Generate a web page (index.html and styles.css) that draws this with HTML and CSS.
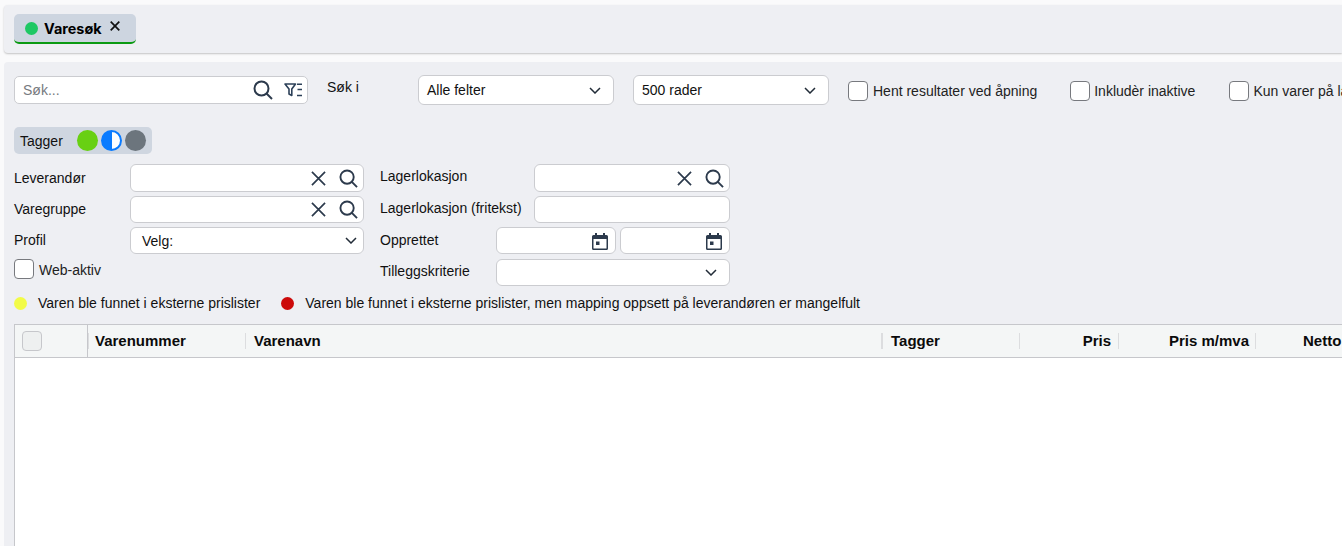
FILE: index.html
```html
<!DOCTYPE html>
<html lang="no">
<head>
<meta charset="utf-8">
<title>Varesøk</title>
<link rel="stylesheet" href="styles.css">
</head>
<body>
<svg class="defs" width="0" height="0" aria-hidden="true">
  <symbol id="i-search" viewBox="0 0 20 20"><circle cx="8.500" cy="8.500" r="7" fill="none" stroke="currentColor" stroke-width="2"/><path d="M13.500 13.500L19 19" stroke="currentColor" stroke-width="2" fill="none"/></symbol>
  <symbol id="i-x" viewBox="0 0 16 16"><path d="M1 1L15 15M15 1L1 15" stroke="currentColor" stroke-width="1.800" fill="none"/></symbol>
  <symbol id="i-chev" viewBox="0 0 12 7"><path d="M1 1L6 6L11 1" stroke="currentColor" stroke-width="1.500" fill="none"/></symbol>
  <symbol id="i-cal" viewBox="0 0 16 18"><path d="M3 1h2v2h6V1h2v2h1.500A1.500 1.500 0 0 1 16 4.500v12A1.500 1.500 0 0 1 14.500 18h-13A1.500 1.500 0 0 1 0 16.500v-12A1.500 1.500 0 0 1 1.500 3H3zM1.500 7v9.500h13V7z" fill="currentColor"/><rect x="4" y="9.500" width="3.500" height="3.500" fill="currentColor"/></symbol>
</svg>

<section class="panel tabs">
  <div class="tab">
    <span class="tab-dot"></span>
    <span class="tab-label">Varesøk</span>
    <svg class="tab-x" width="10" height="10" viewBox="0 0 10 10"><path d="M.7.700L9.300 9.300M9.300.700L.7 9.300" stroke="currentColor" stroke-width="1.700" fill="none"/></svg>
  </div>
</section>

<main class="panel search">
  <div class="top-row">
    <div class="field search-box">
      <span class="placeholder">Søk...</span>
      <svg class="ic-search-lg" width="20" height="20"><use href="#i-search"/></svg>
      <svg class="ic-filter" width="19" height="14" viewBox="0 0 19 14"><path d="M1 1h10.500L7.800 6v6.500L5 11V6z" fill="none" stroke="currentColor" stroke-width="1.600" stroke-linejoin="round"/><path d="M13 1.200h5M13.500 6.500h4.500M13 12.500h5" stroke="currentColor" stroke-width="1.500" fill="none"/></svg>
    </div>
    <span class="search-in">Søk i</span>
    <div class="field select w196"><span>Alle felter</span><svg class="chev" width="12" height="7"><use href="#i-chev"/></svg></div>
    <div class="field select w196"><span>500 rader</span><svg class="chev" width="12" height="7"><use href="#i-chev"/></svg></div>
    <label class="check c1"><span class="box"></span>Hent resultater ved åpning</label>
    <label class="check c2"><span class="box"></span>Inkludèr inaktive</label>
    <label class="check c3"><span class="box"></span>Kun varer på lager</label>
  </div>

  <div class="tagger">
    <span class="tagger-label">Tagger</span>
    <span class="tag green"></span>
    <span class="tag half"></span>
    <span class="tag grey"></span>
  </div>

  <div class="form">
    <div class="col col-left">
      <div class="row">
        <span class="lbl">Leverandør</span>
        <div class="field lookup w234"><svg class="ic-x" width="15" height="15"><use href="#i-x"/></svg><svg class="ic-s" width="19" height="19"><use href="#i-search"/></svg></div>
      </div>
      <div class="row r2">
        <span class="lbl">Varegruppe</span>
        <div class="field lookup w234"><svg class="ic-x" width="15" height="15"><use href="#i-x"/></svg><svg class="ic-s" width="19" height="19"><use href="#i-search"/></svg></div>
      </div>
      <div class="row r3">
        <span class="lbl">Profil</span>
        <div class="field select w234 velg"><span>Velg:</span><svg class="chev" width="12" height="7"><use href="#i-chev"/></svg></div>
      </div>
      <label class="check web"><span class="box"></span><span class="web-text">Web-aktiv</span></label>
    </div>
    <div class="col col-right">
      <div class="row">
        <span class="lbl lbl-r">Lagerlokasjon</span>
        <div class="field lookup w196"><svg class="ic-x" width="15" height="15"><use href="#i-x"/></svg><svg class="ic-s" width="19" height="19"><use href="#i-search"/></svg></div>
      </div>
      <div class="row r2">
        <span class="lbl lbl-r">Lagerlokasjon (fritekst)</span>
        <div class="field w196 plain"></div>
      </div>
      <div class="row r3">
        <span class="lbl lbl-s">Opprettet</span>
        <div class="field date d1"><svg class="cal" width="16" height="18"><use href="#i-cal"/></svg></div>
        <div class="field date d2"><svg class="cal" width="16" height="18"><use href="#i-cal"/></svg></div>
      </div>
      <div class="row r4">
        <span class="lbl lbl-s">Tilleggskriterie</span>
        <div class="field select extra"><svg class="chev" width="12" height="7"><use href="#i-chev"/></svg></div>
      </div>
    </div>
  </div>

  <div class="legend">
    <span class="dot yellow"></span><span class="leg-a">Varen ble funnet i eksterne prislister</span>
    <span class="dot red"></span><span>Varen ble funnet i eksterne prislister, men mapping oppsett på leverandøren er mangelfult</span>
  </div>

  <div class="table">
    <div class="thead">
      <div class="th th-check"><span class="head-box"></span></div>
      <div class="th th-num">Varenummer</div>
      <div class="th th-name">Varenavn</div>
      <div class="th th-tag">Tagger</div>
      <div class="th th-pris right">Pris</div>
      <div class="th th-mva right">Pris m/mva</div>
      <div class="th th-net">Netto</div>
    </div>
  </div>
</main>
</body>
</html>
```
FILE: styles.css
```css
* { box-sizing: border-box; }
html, body { margin: 0; height: 546px; overflow: hidden; }
body {
  background: #fafafb;
  padding: 5px 0 0 4px;
  font: 14px/16px "Liberation Sans", Arial, sans-serif;
  color: #111;
}
.defs { position: absolute; }
.panel { background: #eeeff3; border-radius: 4px 0 0 4px; width: 1338px; }
.tabs {
  height: 48px;
  padding: 9px 0 0 10px;
  margin-bottom: 9px;
  box-shadow: 0 1px 2px rgba(0,0,0,.22);
}
.tab {
  width: 122px;
  height: 30px;
  background: #cdd5e0;
  border-bottom: 2px solid #0b9a12;
  border-radius: 5px;
  display: flex;
  align-items: center;
  padding: 0 0 0 11px;
}
.tab-dot { width: 13px; height: 13px; border-radius: 50%; background: #1ec864; flex: none; }
.tab-label { font: 700 14.400px/16px Inter, sans-serif; color: #000; margin: 1px 0 0 6px; }
.tab-x { margin-left: 8px; margin-top: -4px; color: #111; flex: none; }

.search { height: 484px; padding: 13px 0 0 10px; overflow: hidden; border-radius: 4px 0 0 0; }
.field { background: #fff; border: 1px solid #cbccd0; border-radius: 6px; display: flex; align-items: center; flex: none; }
.top-row { display: flex; align-items: flex-start; white-space: nowrap; height: 30px; }
.search-box { width: 294px; height: 28px; margin-top: 1px; padding: 0 4px 0 8px; border-radius: 5px; }
.placeholder { color: #777a80; flex: 1; }
.ic-search-lg { color: #2c3a4c; margin-right: 11px; }
.ic-filter { color: #2c4058; }
.search-in { margin: 4px 0 0 19px; width: 91px; flex: none; }
.select { padding: 0 12px 0 8px; justify-content: space-between; color: #111; }
.top-row .select { height: 30px; }
.top-row .select + .select { margin-left: 19px; }
.chev { color: #222c38; flex: none; }
.w196 { width: 196px; }
.w234 { width: 234px; }
.check { display: flex; align-items: center; color: #222; flex: none; }
.box { width: 20px; height: 20px; background: #fff; border: 1px solid #77797e; border-radius: 4px; margin-right: 5px; flex: none; }
.c1 { margin: 6px 0 0 19px; }
.c2 { margin: 6px 0 0 33px; }
.c3 { margin: 6px 0 0 33px; }
.c2 .box, .c3 .box { margin-right: 4px; }
.c2 { margin-right: 1px; }

.tagger {
  margin-top: 22px;
  width: 138px;
  height: 27px;
  background: #cfd6e0;
  border-radius: 5px;
  display: flex;
  align-items: center;
  padding: 0 0 0 6px;
  gap: 3px;
}
.tagger-label { width: 54px; }
.tag { width: 21px; height: 21px; border-radius: 50%; flex: none; }
.green { background: #68d013; }
.half { background: linear-gradient(90deg, #0a7bff 50%, #fff 50%); border: 2px solid #0a7bff; }
.grey { background: #6c757d; }

.form { display: flex; margin-top: 10px; height: 122px; }
.col { flex: none; }
.col-left { width: 366px; }
.row { display: flex; align-items: center; }
.row .field { height: 28px; }
.r2 { margin-top: 4px; }
.r2 .field { height: 27px; }
.r3 { margin-top: 4px; }
.r3 .field { height: 27px; }
.r4 { margin-top: 5px; }
.r4 .field { height: 27px; }
.lbl { width: 116px; flex: none; }
.lbl-r { width: 154px; margin-top: -4px; }
.lbl-s { width: 116px; }
.r2 .lbl:not(.lbl-r), .r3 .lbl { margin-top: -2px; }
.r4 .lbl { margin-top: -4px; }
.lookup { justify-content: flex-end; padding-right: 5px; color: #2c3a4c; }
.ic-x { margin-right: 13px; }
.velg { padding-left: 11px; padding-right: 6px; }
.web { margin-top: 5px; }
.web-text { margin-top: 2px; }
.date { color: #2c3a4c; justify-content: flex-end; padding-right: 7px; }
.d1 { width: 120px; margin-right: 4px; }
.d2 { width: 110px; }
.extra { width: 234px; justify-content: flex-end; padding-right: 12px; }

.legend { display: flex; align-items: center; margin-top: 7px; height: 20px; }
.dot { width: 13px; height: 13px; border-radius: 50%; flex: none; }
.yellow { background: #f2fb47; margin-right: 11px; }
.red { background: #cc0a0a; margin-right: 11px; }
.leg-a { margin-right: 21px; }

.table { margin-top: 11px; height: 240px; background: #fff; border: 1px solid #c6c7cb; border-right: 0; }
.thead { display: flex; height: 33px; background: #f4f6f6; border-bottom: 1px solid #c6c7cb; font-weight: 700; font-size: 15px; color: #0b0b0b; white-space: nowrap; }
.th { display: flex; align-items: center; flex: none; position: relative; padding: 0 7px; }
.th + .th::before { content: ""; position: absolute; left: 0; top: 8px; height: 16px; width: 1px; background: #dcdddf; }
.th-check { width: 73px; padding-left: 7px; border-right: 1px solid #c6c7cb; }
.head-box { width: 20px; height: 20px; border: 1px solid #c6c7cb; border-radius: 4px; background: #eef0f0; }
.th-num { width: 157px; }
.th-name { width: 637px; padding-left: 9px; }
.th-tag { width: 137px; padding-left: 9px; }
.th-tag::before { width: 2px !important; left: -1px !important; }
.th-pris { width: 99px; }
.th-mva { width: 137px; padding-right: 6px; }
.th-net { width: 120px; padding-left: 48px; }
.right { justify-content: flex-end; }
```
